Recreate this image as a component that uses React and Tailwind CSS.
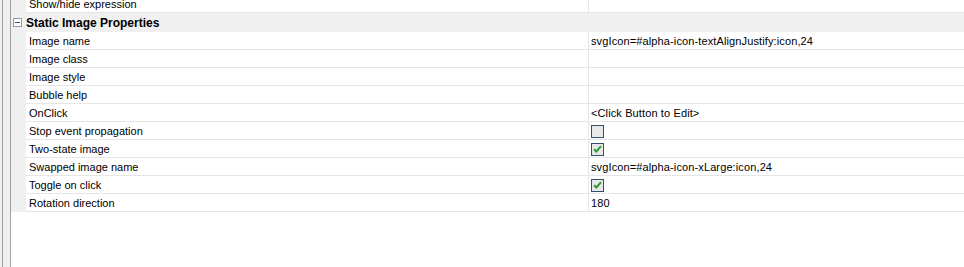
import React from "react";

const font = { fontFamily: '"Liberation Sans", Arial, sans-serif' };

function Check({ checked }) {
  return (
    <div className="w-[13px] h-[13px] border border-[#33506e] bg-[#e8e8e8] flex items-center justify-center">
      {checked && (
        <svg width="9" height="8" viewBox="0 0 9 8">
          <path d="M1 4.2 L3.4 6.5 L8 1.2" stroke="#2e9b2e" strokeWidth="2" fill="none" />
        </svg>
      )}
    </div>
  );
}

function Row({ name, value, check }) {
  return (
    <div className="flex h-[18px]">
      <div className="w-[15px] bg-[#f0f0f0] shrink-0" />
      <div className="w-[563px] shrink-0 border-b border-r border-[#e6e6e6] pl-[3px] pt-[1px] flex items-center text-[11px] text-black">
        {name}
      </div>
      <div className="flex-1 border-b border-[#e6e6e6] pl-[2px] pt-[1px] flex items-center text-[11px] text-black tracking-[0.12px]">
        {check !== undefined ? <Check checked={check} /> : value}
      </div>
    </div>
  );
}

export default function App() {
  const rows = [
    ["Image name", "svgIcon=#alpha-icon-textAlignJustify:icon,24"],
    ["Image class", ""],
    ["Image style", ""],
    ["Bubble help", ""],
    ["OnClick", "<Click Button to Edit>"],
    ["Stop event propagation", null, false],
    ["Two-state image", null, true],
    ["Swapped image name", "svgIcon=#alpha-icon-xLarge:icon,24"],
    ["Toggle on click", null, true],
    ["Rotation direction", "180"],
  ];
  return (
    <div className="w-[964px] h-[267px] bg-white flex overflow-hidden" style={font}>
      <div className="flex shrink-0">
        <div className="w-[2px] bg-[#f0f0f0]" />
        <div className="w-px bg-[#a0a0a0]" />
        <div className="w-[7px] bg-[#f0f0f0]" />
        <div className="w-px bg-[#a0a0a0]" />
      </div>
      <div className="flex-1 flex flex-col -mt-[5px]">
        <Row name="Show/hide expression" value="" />
        <div className="flex h-[19px] bg-[#f0f0f0] items-center">
          <div className="w-[15px] shrink-0 flex items-center pl-[2px]">
            <div className="w-[9px] h-[9px] border border-[#8c9db5] bg-white flex items-center justify-center">
              <div className="w-[5px] h-px bg-[#3b4f6b]" />
            </div>
          </div>
          <div className="text-[12px] font-bold text-black pt-[1px]">Static Image Properties</div>
        </div>
        {rows.map(([n, v, c], i) => (
          <Row key={i} name={n} value={v} check={c} />
        ))}
      </div>
    </div>
  );
}
